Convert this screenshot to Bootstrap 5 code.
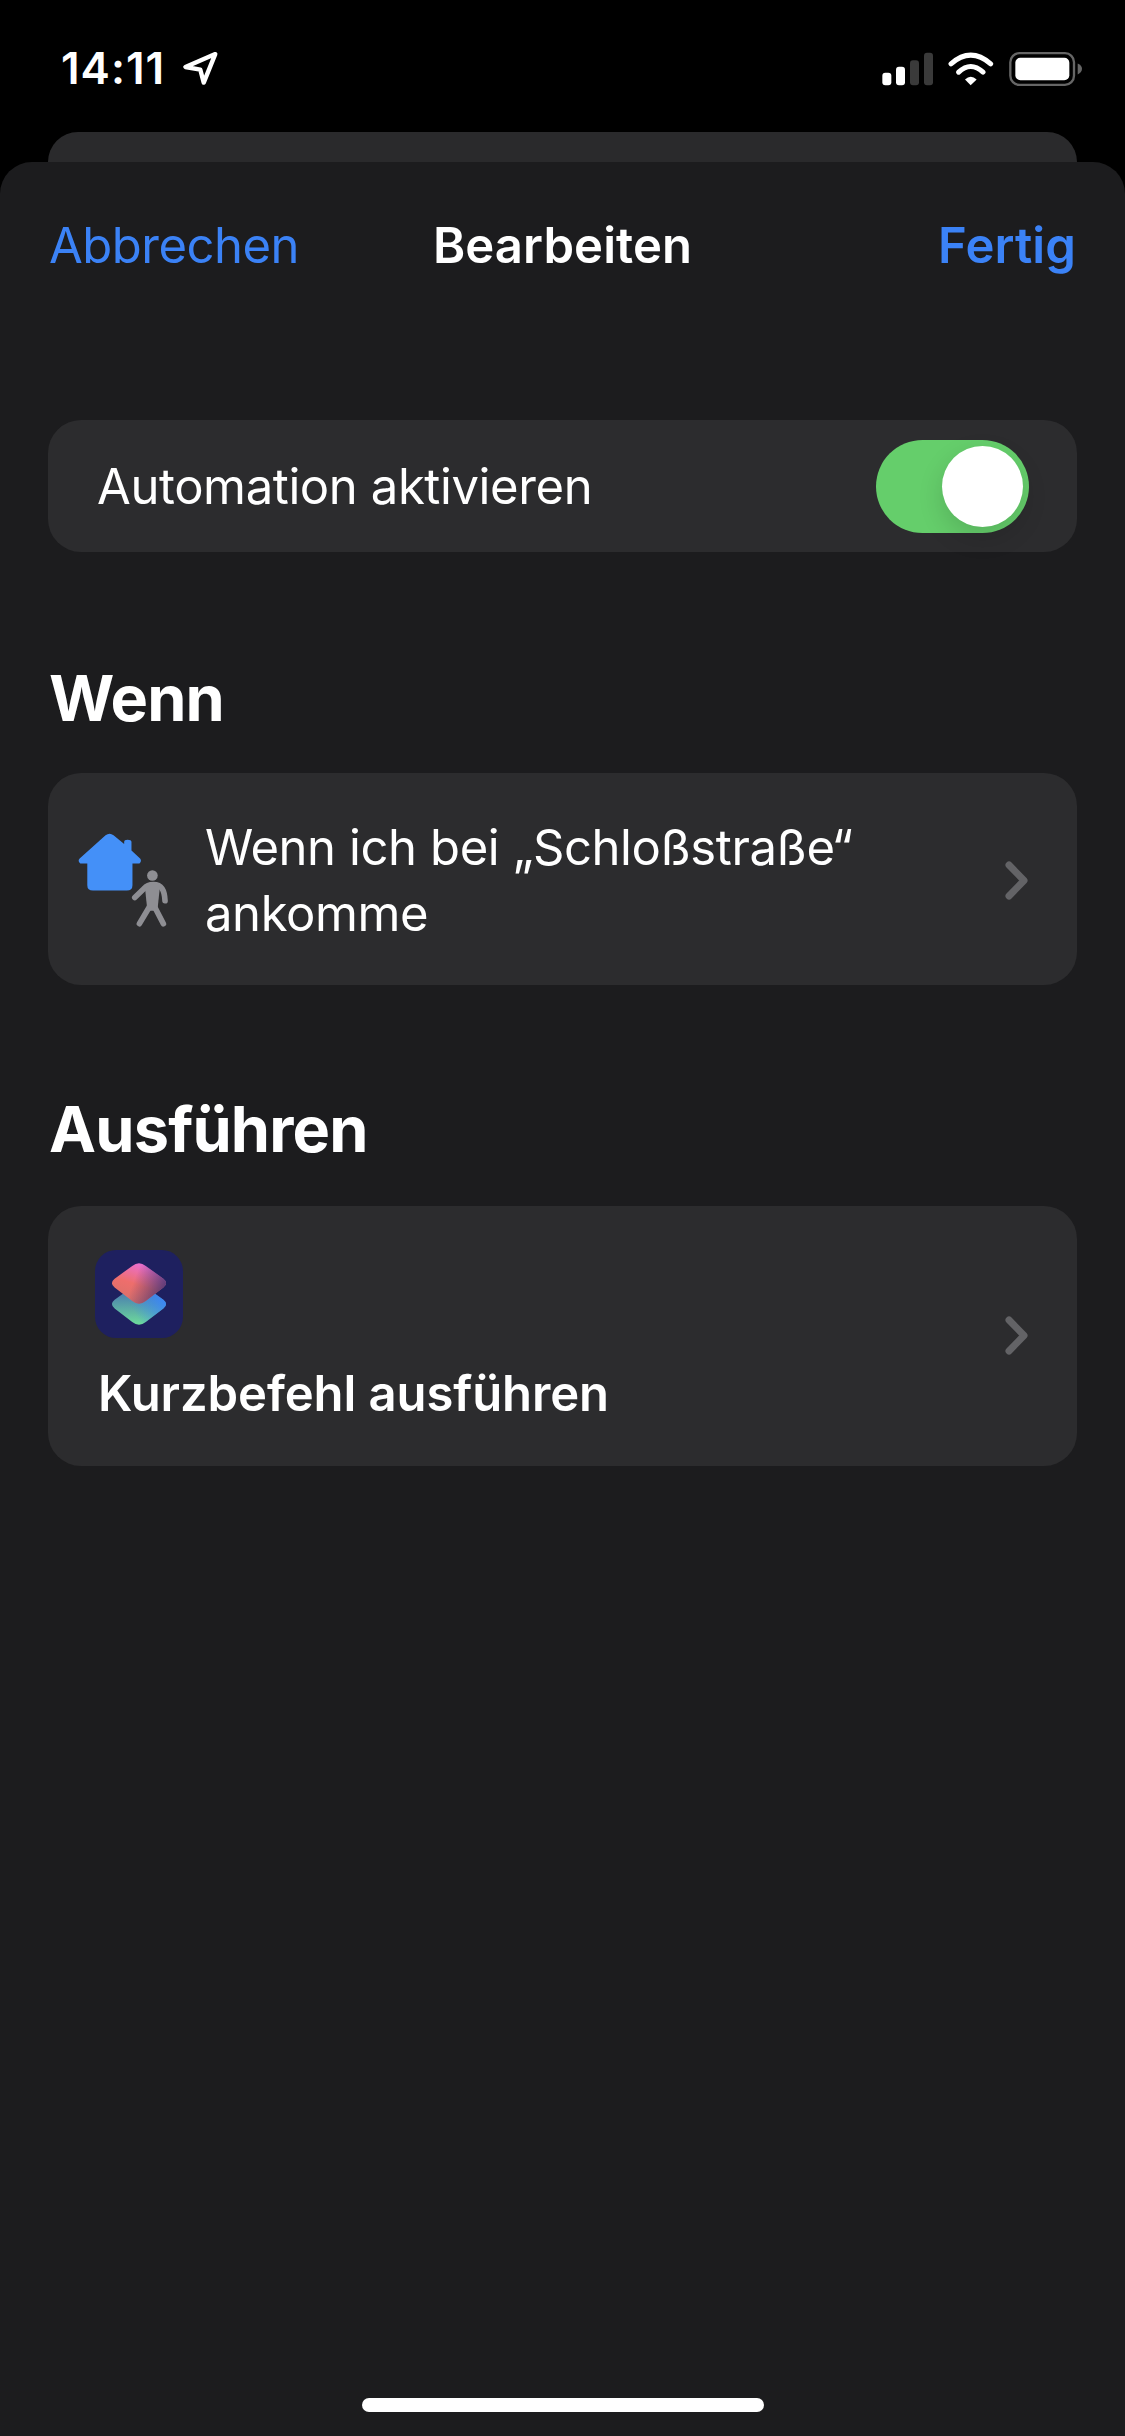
<!DOCTYPE html>
<html lang="de">
<head>
  <meta charset="UTF-8">
  <meta name="viewport" content="width=device-width, initial-scale=1">
  <title>Bearbeiten</title>
  <link href="https://cdn.jsdelivr.net/npm/bootstrap@5.3.3/dist/css/bootstrap.min.css" rel="stylesheet">
  <style>
    html, body { height: 100%; }
    body { background: #000; color: #fff; font-family: Inter, "Noto Sans", sans-serif; width: 1125px; height: 2436px; overflow: hidden; }
    .phone { height: 2436px; }
    .status-bar { height: 132px; padding: 0 41px 0 61px; }
    .status-bar-inner { height: 136px; }
    .clock { font-size: 44px; font-weight: 600; line-height: 1; letter-spacing: 1px; }
    .peek { height: 30px; margin: 0 48px; background: #2a2a2c; border-radius: 30px 30px 0 0; }
    .sheet { background: #1c1c1e; border-radius: 32px 32px 0 0; padding: 50px 48px 24px; }
    .sheet-nav { height: 68px; font-size: 49px; letter-spacing: -.5px; padding: 0 1px 0 1px; }
    .sheet-nav a { color: #3b82f6; text-decoration: none; }
    .nav-side { flex: 1 1 0; }
    .sheet-title { font-weight: 600; letter-spacing: .1px; }
    .nav-done { font-weight: 600; letter-spacing: .1px; }
    .group-row { background: #2c2c2e; border-radius: 33px; font-size: 49px; line-height: 66px; letter-spacing: -.4px; }
    .row-toggle { height: 132px; margin-top: 140px; padding: 0 48px 0 49px; }
    .row-label { padding-top: 2px; }
    .toggle { width: 153px; height: 93px; background: #65ce6b; border-radius: 47px; padding: 6px; }
    .toggle-knob { width: 81px; height: 81px; background: #fff; border-radius: 50%; box-shadow: 0 10px 26px rgba(0,0,0,.14); }
    .section-head { font-size: 63px; font-weight: 700; line-height: 72px; letter-spacing: -.8px; margin: 110px 0 39px 1px; }
    .section-head-run { margin: 108px 0 41px 1px; }
    .row-trigger { padding: 40px 49px 38px 29px; letter-spacing: -.4px; }
    .trigger-icon { width: 93px; height: 98px; margin-right: 35px; }
    .row-action { padding: 44px 49px 42px 47px; letter-spacing: 0; }
    .shortcut-icon { width: 88px; height: 88px; }
    .action-name { font-weight: 600; margin: 26px 0 0 3px; line-height: 60px; letter-spacing: -.1px; }
    .chevron { width: 23px; height: 39px; }
    .row-action .chevron { margin-bottom: 3px; }
    .home-bar { width: 402px; height: 14px; background: #fff; border-radius: 7px; }
  </style>
</head>
<body>
  <div class="phone d-flex flex-column">
    <div class="status-bar flex-shrink-0">
      <div class="status-bar-inner d-flex justify-content-between align-items-center">
        <div class="d-flex align-items-center gap-3">
          <span class="clock">14:11</span>
          <svg width="39" height="38" viewBox="415 62 115 110" fill="none" stroke="#fff" stroke-width="13" stroke-linejoin="round">
            <path d="M516 76 L428 114 L472 122 L482 160 Z"/>
          </svg>
        </div>
        <svg width="204" height="37" viewBox="90 60 612 110">
          <rect x="97" y="128" width="27" height="37" rx="9" fill="#fff"/>
          <rect x="138" y="110" width="27" height="55" rx="9" fill="#fff"/>
          <rect x="180" y="90" width="27" height="75" rx="9" fill="#3a3a3a"/>
          <rect x="222" y="68" width="27" height="97" rx="9" fill="#3a3a3a"/>
          <path d="M303 101 Q362 49 422 101 M326 126 Q362 92 399 126" fill="none" stroke="#fff" stroke-width="15" stroke-linecap="round"/>
          <path d="M345 148 Q362 132 380 148 L362 165 Z" fill="#fff"/>
          <rect x="481" y="69" width="191" height="95" rx="27" fill="none" stroke="#666" stroke-width="7"/>
          <rect x="496" y="83" width="162" height="67" rx="15" fill="#fff"/>
          <path d="M683 100 Q696 106 696 116 Q696 127 683 133 Z" fill="#666"/>
        </svg>
      </div>
    </div>
    <div class="peek flex-shrink-0"></div>
    <div class="sheet flex-grow-1 d-flex flex-column">
      <div class="sheet-nav d-flex align-items-center">
        <div class="nav-side"><a href="#">Abbrechen</a></div>
        <span class="sheet-title">Bearbeiten</span>
        <div class="nav-side text-end"><a href="#" class="nav-done">Fertig</a></div>
      </div>

      <div class="group-row row-toggle d-flex justify-content-between align-items-center">
        <span class="row-label">Automation aktivieren</span>
        <div class="toggle d-flex justify-content-end" role="switch" aria-checked="true">
          <div class="toggle-knob"></div>
        </div>
      </div>

      <h2 class="section-head">Wenn</h2>
      <div class="group-row row-trigger d-flex align-items-center">
        <svg class="trigger-icon flex-shrink-0" viewBox="80 85 280 295">
          <path d="M178 93 Q184 93 190 98 L222 124 L222 118 Q222 111 232 111 Q244 111 244 118 L244 144 L270 168 Q276 176 268 183 L247 183 L247 248 Q247 264 230 264 L128 264 Q111 264 111 248 L111 183 L90 183 Q81 176 88 168 L166 98 Q172 93 178 93 Z" fill="#4490f8"/>
          <circle cx="307" cy="219" r="16" fill="#8e8e93"/>
          <path d="M254 285 L282 258 Q292 246 310 246 Q328 246 336 258 Q344 270 345 295 M296 252 L300 310 L268 364 M312 310 L340 364" fill="none" stroke="#8e8e93" stroke-width="17" stroke-linecap="round" stroke-linejoin="round"/>
          <path d="M284 250 L330 250 L322 325 L292 325 Z" fill="#8e8e93"/>
        </svg>
        <span class="flex-grow-1 row-label">Wenn ich bei „Schloßstraße“<br>ankomme</span>
        <svg class="chevron flex-shrink-0" viewBox="0 0 23 39" fill="none" stroke="#636366" stroke-width="7" stroke-linecap="round" stroke-linejoin="round">
          <path d="M4 4 L19 19.5 L4 35"/>
        </svg>
      </div>

      <h2 class="section-head section-head-run">Ausführen</h2>
      <div class="group-row row-action d-flex align-items-center justify-content-between">
        <div>
          <svg class="shortcut-icon d-block" viewBox="48 45 260 260">
            <defs>
              <linearGradient id="topFill" gradientUnits="userSpaceOnUse" x1="190" y1="80" x2="150" y2="200">
                <stop offset="0" stop-color="#ea6fdc"/>
                <stop offset=".55" stop-color="#ee6e6c"/>
                <stop offset="1" stop-color="#d9706a"/>
              </linearGradient>
              <linearGradient id="topShade" gradientUnits="userSpaceOnUse" x1="165" y1="130" x2="258" y2="165">
                <stop offset="0" stop-color="#3a2f70" stop-opacity="0"/>
                <stop offset="1" stop-color="#3a2f70" stop-opacity=".85"/>
              </linearGradient>
              <linearGradient id="lowFill" gradientUnits="userSpaceOnUse" x1="178" y1="270" x2="178" y2="170">
                <stop offset="0" stop-color="#6fe09a"/>
                <stop offset="1" stop-color="#4a7bb0"/>
              </linearGradient>
              <linearGradient id="lowBlue" gradientUnits="userSpaceOnUse" x1="258" y1="190" x2="170" y2="240">
                <stop offset="0" stop-color="#3a86fa"/>
                <stop offset="1" stop-color="#3a86fa" stop-opacity="0"/>
              </linearGradient>
            </defs>
            <rect x="48" y="45" width="260" height="260" rx="62" fill="#1e205f"/>
            <path d="M158 154 Q178 138 198 154 L250 192 Q266 205 250 218 L198 258 Q178 274 158 258 L106 218 Q90 205 106 192 Z" fill="url(#lowFill)"/>
            <path d="M158 154 Q178 138 198 154 L250 192 Q266 205 250 218 L198 258 Q178 274 158 258 L106 218 Q90 205 106 192 Z" fill="url(#lowBlue)"/>
            <path d="M158 92 Q178 76 198 92 L250 130 Q266 143 250 156 L198 196 Q178 212 158 196 L106 156 Q90 143 106 130 Z" fill="url(#topFill)"/>
            <path d="M158 92 Q178 76 198 92 L250 130 Q266 143 250 156 L198 196 Q178 212 158 196 L106 156 Q90 143 106 130 Z" fill="url(#topShade)"/>
          </svg>
          <div class="action-name">Kurzbefehl ausführen</div>
        </div>
        <svg class="chevron flex-shrink-0" viewBox="0 0 23 39" fill="none" stroke="#636366" stroke-width="7" stroke-linecap="round" stroke-linejoin="round">
          <path d="M4 4 L19 19.5 L4 35"/>
        </svg>
      </div>

      <div class="home-bar mt-auto mx-auto"></div>
    </div>
  </div>
  <script src="https://cdn.jsdelivr.net/npm/bootstrap@5.3.3/dist/js/bootstrap.bundle.min.js"></script>
</body>
</html>
